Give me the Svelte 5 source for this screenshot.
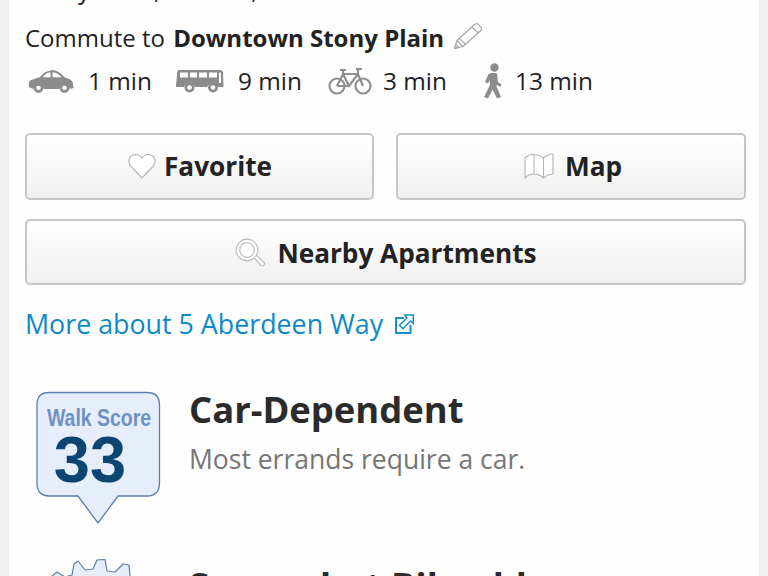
<script>
  const modes = [
    { kind: 'car', label: '1 min' },
    { kind: 'bus', label: '9 min' },
    { kind: 'bike', label: '3 min' },
    { kind: 'walk', label: '13 min' }
  ];
</script>

<div class="page">
  <main class="panel">
    <p class="address">Stony Plain, Alberta, T7Z 2W8</p>

    <p class="commute">
      <span>Commute to&nbsp;</span><strong>Downtown Stony Plain</strong>
      <svg class="pencil" viewBox="0 0 30 28" width="30" height="28" fill="none" stroke="#a6a6a6" stroke-width="1.2" stroke-linejoin="round">
        <path d="M1.5 26.5 L4 18.5 L21.5 2.5 Q23.5 1 25 2.2 L28 5.2 Q29.2 6.8 27.8 8.5 L10 24.5 Z" />
        <path d="M4 18.5 L10 24.5 M6.5 16.5 L12 22 M19 5 L25 10.8 M1.5 26.5 L5.5 25.4 L2.7 22.5" />
      </svg>
    </p>

    <ul class="modes">
      {#each modes as m}
        <li class="mode mode-{m.kind}">
          {#if m.kind === 'car'}
            <svg viewBox="0 0 46 24" width="46" height="24" fill="#8c8c8c">
              <path fill-rule="evenodd" d="M1 18 Q0 12.500 3 11 Q8 9.500 12 8 Q17 1.500 25 1 Q31 1.500 37 8.500 Q44 10 45 14 L45.500 19 L42 20 A6 6 0 0 0 31 20 L16 20 A6 6 0 0 0 5 20 Z M15 8.300 L22.500 8.300 L22.500 3.200 Q17.500 3.500 15 8.300 Z M24.500 3.200 L24.500 8.300 L33.500 8.300 Q30 3.500 24.500 3.200 Z" />
              <path fill-rule="evenodd" d="M10.500 13.800 A5 5 0 1 0 10.501 13.800 Z M10.500 16.500 A2.300 2.300 0 1 1 10.499 16.500 Z M36.500 13.800 A5 5 0 1 0 36.501 13.800 Z M36.500 16.500 A2.300 2.300 0 1 1 36.499 16.500 Z" />
            </svg>
          {:else if m.kind === 'bus'}
            <svg viewBox="0 0 48 24" width="48" height="24" fill="#8c8c8c">
              <path fill-rule="evenodd" d="M2 1 L44 1 Q47 1 47 4 L47.500 18 L42 18 A6 6 0 0 0 31 18 L19 18 A6 6 0 0 0 8 18 L0 18 L0 16 Q1 8 1 4 Z M4 3.500 L4 8.500 L12 8.500 L12 3.500 Z M14 3.500 L14 8.500 L21 8.500 L21 3.500 Z M23 3.500 L23 8.500 L31 8.500 L31 3.500 Z M33 3.500 L33 8.500 L41 8.500 L41 3.500 Z M43 3.500 L43 14 L45 14 L44.800 3.500 Z" />
              <path fill-rule="evenodd" d="M13.500 13.500 A5 5 0 1 0 13.501 13.500 Z M13.500 16.200 A2.300 2.300 0 1 1 13.499 16.200 Z M37 13.500 A5 5 0 1 0 37.001 13.500 Z M37 16.200 A2.300 2.300 0 1 1 36.999 16.200 Z" />
            </svg>
          {:else if m.kind === 'bike'}
            <svg viewBox="0 0 44 28" width="44" height="28" fill="none" stroke="#8f8f8f" stroke-width="2.200">
              <circle cx="9" cy="19" r="7.500" />
              <circle cx="35" cy="19" r="7.500" />
              <path d="M9 19 L15 7 L30 7 L35 19 M15 7 L21 19 L30 7 M9 19 L21 19 M12 3 L18 3 M15 3 L15 7 M28 2 L34 2 M30 2 L30 7" />
            </svg>
          {:else}
            <svg viewBox="0 0 20 36" width="20" height="36" fill="#8c8c8c">
              <circle cx="11.500" cy="4.500" r="4.200" />
              <path d="M5.500 11 Q10 8.700 14 10.500 L15 19 L18.500 21.500 L17.500 24 L13.500 21.800 L13.500 23.500 L18 34 L14 35.500 L9.500 26.500 L5 35.500 L1 34 L7 22 L6.500 17 L5 20.500 L2 19 Z" />
            </svg>
          {/if}
          <span>{m.label}</span>
        </li>
      {/each}
    </ul>

    <div class="buttons">
      <button type="button" class="fav">
        <svg viewBox="0 0 28 26" width="28" height="26" fill="#fff" stroke="#b4b4b4" stroke-width="1.200">
          <path d="M14 25 L3 13.500 Q.5 10.500 1 7 Q2 2 7.500 1.500 Q12 1.500 14 5 Q16 1.500 20.500 1.500 Q26 2 27 7 Q27.500 10.500 25 13.500 Z" />
        </svg>
        Favorite
      </button>
      <button type="button" class="map">
        <svg viewBox="0 0 30 26" width="30" height="26" fill="#fff" stroke="#b4b4b4" stroke-width="1.100" stroke-linejoin="round">
          <path d="M1 5 Q5 1 10 1.500 L10 21 Q5 21 1 25 Z M10 1.500 Q15 1.500 19.500 5 L19.500 25 Q15 21 10 21 M19.500 5 Q24 1 29 1 L29 21 Q24 21 19.500 25" />
        </svg>
        Map
      </button>
      <button type="button" class="wide">
        <svg viewBox="0 0 30 29" width="30" height="29" fill="none" stroke="#bdbdbd" stroke-width="1.200">
          <circle cx="12" cy="12" r="10.800" fill="#fff" />
          <circle cx="12" cy="12" r="7.300" />
          <path d="M19.500 20 L25.500 27 Q27.500 28.500 29 27 Q30 25.500 28.500 24 L21.500 17.500" fill="#fff" />
        </svg>
        Nearby Apartments
      </button>
    </div>

    <a class="more" href="#more">
      More about 5 Aberdeen Way
      <svg viewBox="0 0 19 20" width="19" height="20" fill="none" stroke="#1590c8">
        <path d="M9 4 L1 4 L1 19 L15.500 19 L15.500 11" stroke-width="2" />
        <path d="M18.300 1 L18.300 9.500 L15.500 7 L8 14.800 L4.500 11.300 L12 4 L9.800 1 Z" fill="#fefefe" stroke-width="1.500" stroke-linejoin="miter" />
      </svg>
    </a>

    <section class="score">
      <svg class="badge" viewBox="0 0 126 136" width="126" height="136">
        <path d="M14 1.500 L112 1.500 Q124.500 1.500 124.500 14 L124.500 92 Q124.500 105 112 105 L83 105 L63 132 L43 105 L14 105 Q2 105 2 92 L2 14 Q2 1.500 14 1.500 Z" fill="#e6eefb" stroke="#5e7eaa" stroke-width="1.300" />
        <text x="64" y="35" text-anchor="middle" textLength="104" lengthAdjust="spacingAndGlyphs" class="badge-label">Walk Score</text>
        <text x="55" y="91" text-anchor="middle" class="badge-num">33</text>
      </svg>
      <div class="score-text">
        <h2>Car-Dependent</h2>
        <p>Most errands require a car.</p>
      </div>
    </section>

    <section class="score second">
      <svg class="badge" viewBox="35 557 126 40" width="126" height="40">
        <path d="M51 575 L57 570 L65 575 L72 573 L74 562 L78 559 L85 568 L93 567 L97 558 L105 557.500 L107 569 L115 570 L123 562 L129 563 L130 575 L137 580 L137 600 L40 600 L44 582 Z" fill="#e6eefb" stroke="#5e7eaa" stroke-width="1.200" stroke-linejoin="round"/>
        <circle cx="144" cy="576" r="2" fill="#9a9a9a" />
      </svg>
      <div class="score-text">
        <h2>Somewhat Bikeable</h2>
      </div>
    </section>
  </main>
</div>

<style>
  :global(body) {
    margin: 0;
    background: #efefef;
  }
  .page {
    height: 576px;
    overflow: hidden;
    font-family: "Open Sans", sans-serif;
    color: #222;
  }
  .panel {
    margin: 0 9px;
    padding: 0 14px 0 16px;
    background: #fefefe;
    height: 700px;
  }
  p {
    margin: 0;
  }
  .address {
    font-size: 25px;
    line-height: 34px;
    margin-top: -28px;
    white-space: nowrap;
  }
  .commute {
    font-size: 24px;
    line-height: 34px;
    margin-top: 15px;
    display: flex;
    align-items: center;
    white-space: nowrap;
  }
  .commute strong {
    font-weight: 700;
    margin-left: 2px;
  }
  .pencil {
    margin-left: 9px;
    margin-top: -5px;
  }
  .modes {
    list-style: none;
    margin: 7px 0 0;
    padding: 0;
    display: flex;
    align-items: center;
    height: 38px;
  }
  .mode {
    display: flex;
    align-items: center;
    font-size: 24.400px;
    line-height: 34px;
  }
  .mode-car {
    margin-left: 3px;
    gap: 14px;
  }
  .mode-bus {
    margin-left: 24px;
    gap: 14px;
  }
  .mode-bike {
    margin-left: 26px;
    gap: 11px;
  }
  .mode-walk {
    margin-left: 36px;
    gap: 12px;
  }
  .buttons {
    margin-top: 33px;
    display: grid;
    grid-template-columns: 349px 350px;
    column-gap: 22px;
    row-gap: 19px;
  }
  button {
    height: 67px;
    display: flex;
    align-items: center;
    justify-content: center;
    gap: 10px;
    padding: 0 0 1px;
    border: 2px solid #c6c6c6;
    border-radius: 5px;
    background: linear-gradient(#ffffff, #f0f0ef);
    font: 700 26.200px "Open Sans", sans-serif;
    color: #222;
  }
  .fav {
    gap: 8px;
    padding-left: 1px;
  }
  .map {
    gap: 11px;
    padding-left: 4px;
  }
  .wide {
    grid-column: 1 / 3;
    height: 66px;
    gap: 12px;
    padding: 1px 0 0 1px;
  }
  .more {
    display: flex;
    align-items: center;
    gap: 12px;
    margin-top: 20px;
    font-size: 26.800px;
    line-height: 38px;
    color: #0d8ac6;
    text-decoration: none;
  }
  .score {
    display: flex;
    margin-top: 48px;
    margin-left: 10px;
  }
  .badge {
    flex: none;
  }
  .badge-label {
    font: 700 24px "Liberation Sans", sans-serif;
    fill: #6f92c4;
  }
  .badge-num {
    font: 700 65px "Liberation Sans", sans-serif;
    fill: #0d4572;
  }
  .score-text {
    margin-left: 28px;
    margin-top: -5px;
  }
  h2 {
    margin: 0;
    font-size: 36.400px;
    line-height: 46px;
    font-weight: 700;
    color: #2b2b2b;
  }
  .score-text p {
    font-size: 26.500px;
    line-height: 36px;
    margin-top: 9px;
    color: #767676;
  }
  .second {
    margin-top: 32px;
  }
  .second .score-text {
    margin-top: 3px;
  }
</style>
